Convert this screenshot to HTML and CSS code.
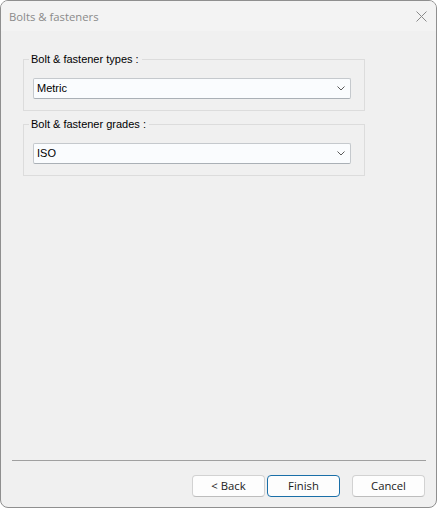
FILE: index.html
```html
<!DOCTYPE html>
<html>
<head>
<meta charset="utf-8">
<title>Bolts &amp; fasteners</title>
<link rel="stylesheet" href="styles.css">
</head>
<body>
<div class="window">
  <div class="titlebar">
    <span class="title">Bolts &amp; fasteners</span>
    <svg class="close" width="11" height="11" viewBox="0 0 11 11"><path d="M0.5 0.5 L10.5 10.5 M10.5 0.5 L0.5 10.5" stroke="#8a8a8a" stroke-width="1" fill="none"/></svg>
  </div>
  <div class="content">
    <div class="group">
      <span class="legend">Bolt &amp; fastener types :</span>
      <div class="combo">
        <span class="value">Metric</span>
        <svg class="chev" width="8" height="5" viewBox="0 0 8 5"><path d="M0.5 0.5 L4 4 L7.5 0.5" stroke="#5a5a5a" stroke-width="1" fill="none"/></svg>
      </div>
    </div>
    <div class="group second">
      <span class="legend">Bolt &amp; fastener grades :</span>
      <div class="combo">
        <span class="value">ISO</span>
        <svg class="chev" width="8" height="5" viewBox="0 0 8 5"><path d="M0.5 0.5 L4 4 L7.5 0.5" stroke="#5a5a5a" stroke-width="1" fill="none"/></svg>
      </div>
    </div>
  </div>
  <div class="footer">
    <div class="sep"></div>
    <div class="buttons">
      <button class="btn">&lt; Back</button>
      <button class="btn primary">Finish</button>
      <button class="btn cancel">Cancel</button>
    </div>
  </div>
</div>
</body>
</html>
```
FILE: styles.css
```css
html, body {
  margin: 0;
  padding: 0;
  background: #ffffff;
}
.window {
  width: 437px;
  height: 508px;
  box-sizing: border-box;
  border: 1px solid #8f8f8f;
  border-radius: 8px;
  overflow: hidden;
  background: #f0f0f0;
  display: flex;
  flex-direction: column;
}
.titlebar {
  height: 30px;
  flex: none;
  background: #f3f3f3;
  display: flex;
  align-items: center;
  justify-content: space-between;
  padding: 0 9px 0 8px;
}
.title {
  font-family: "Open Sans", "Noto Sans", sans-serif;
  font-size: 11.3px;
  color: #8a8a8a;
  line-height: 16px;
  margin-top: 1px;
}
.close {
  display: block;
}
.content {
  flex: 1;
  padding: 28px 0 0 22px;
}
.group {
  width: 342px;
  box-sizing: border-box;
  border: 1px solid #dcdcdc;
  padding: 0 13px 11px 9px;
}
.group.second {
  margin-top: 13px;
}
.legend {
  display: block;
  width: fit-content;
  margin: -7px 0 0 -4px;
  padding: 0 3px 0 2px;
  background: #f0f0f0;
  font-family: "Liberation Sans", Arial, sans-serif;
  font-size: 11px;
  line-height: 13px;
  color: #000;
}
.combo {
  margin-top: 12px;
  height: 21px;
  box-sizing: border-box;
  background: #fafcfe;
  border: 1px solid #c5c9cd;
  border-bottom-color: #aab0b6;
  border-radius: 2px;
  display: flex;
  align-items: center;
  justify-content: space-between;
  padding: 0 5px 0 3px;
}
.value {
  font-family: "Liberation Sans", Arial, sans-serif;
  font-size: 11px;
  line-height: 13px;
  color: #000;
}
.chev {
  display: block;
}
.footer {
  flex: none;
}
.sep {
  height: 1px;
  background: #a0a0a0;
  margin: 0 10px 0 11px;
}
.buttons {
  display: flex;
  justify-content: flex-end;
  padding: 14px 11px 10px 0;
}
.btn {
  width: 73px;
  height: 22px;
  box-sizing: border-box;
  border: 1px solid #d2d2d2;
  border-bottom-color: #bdbdbd;
  border-radius: 4px;
  background: #fdfdfd;
  font-family: "Open Sans", "Noto Sans", sans-serif;
  font-size: 11.3px;
  color: #1b1b1b;
  padding: 0;
  margin: 0;
  line-height: 18px;
}
.btn.primary {
  margin-left: 2px;
  border-color: #1a6fa8;
}
.btn.cancel {
  margin-left: 12px;
}
```
